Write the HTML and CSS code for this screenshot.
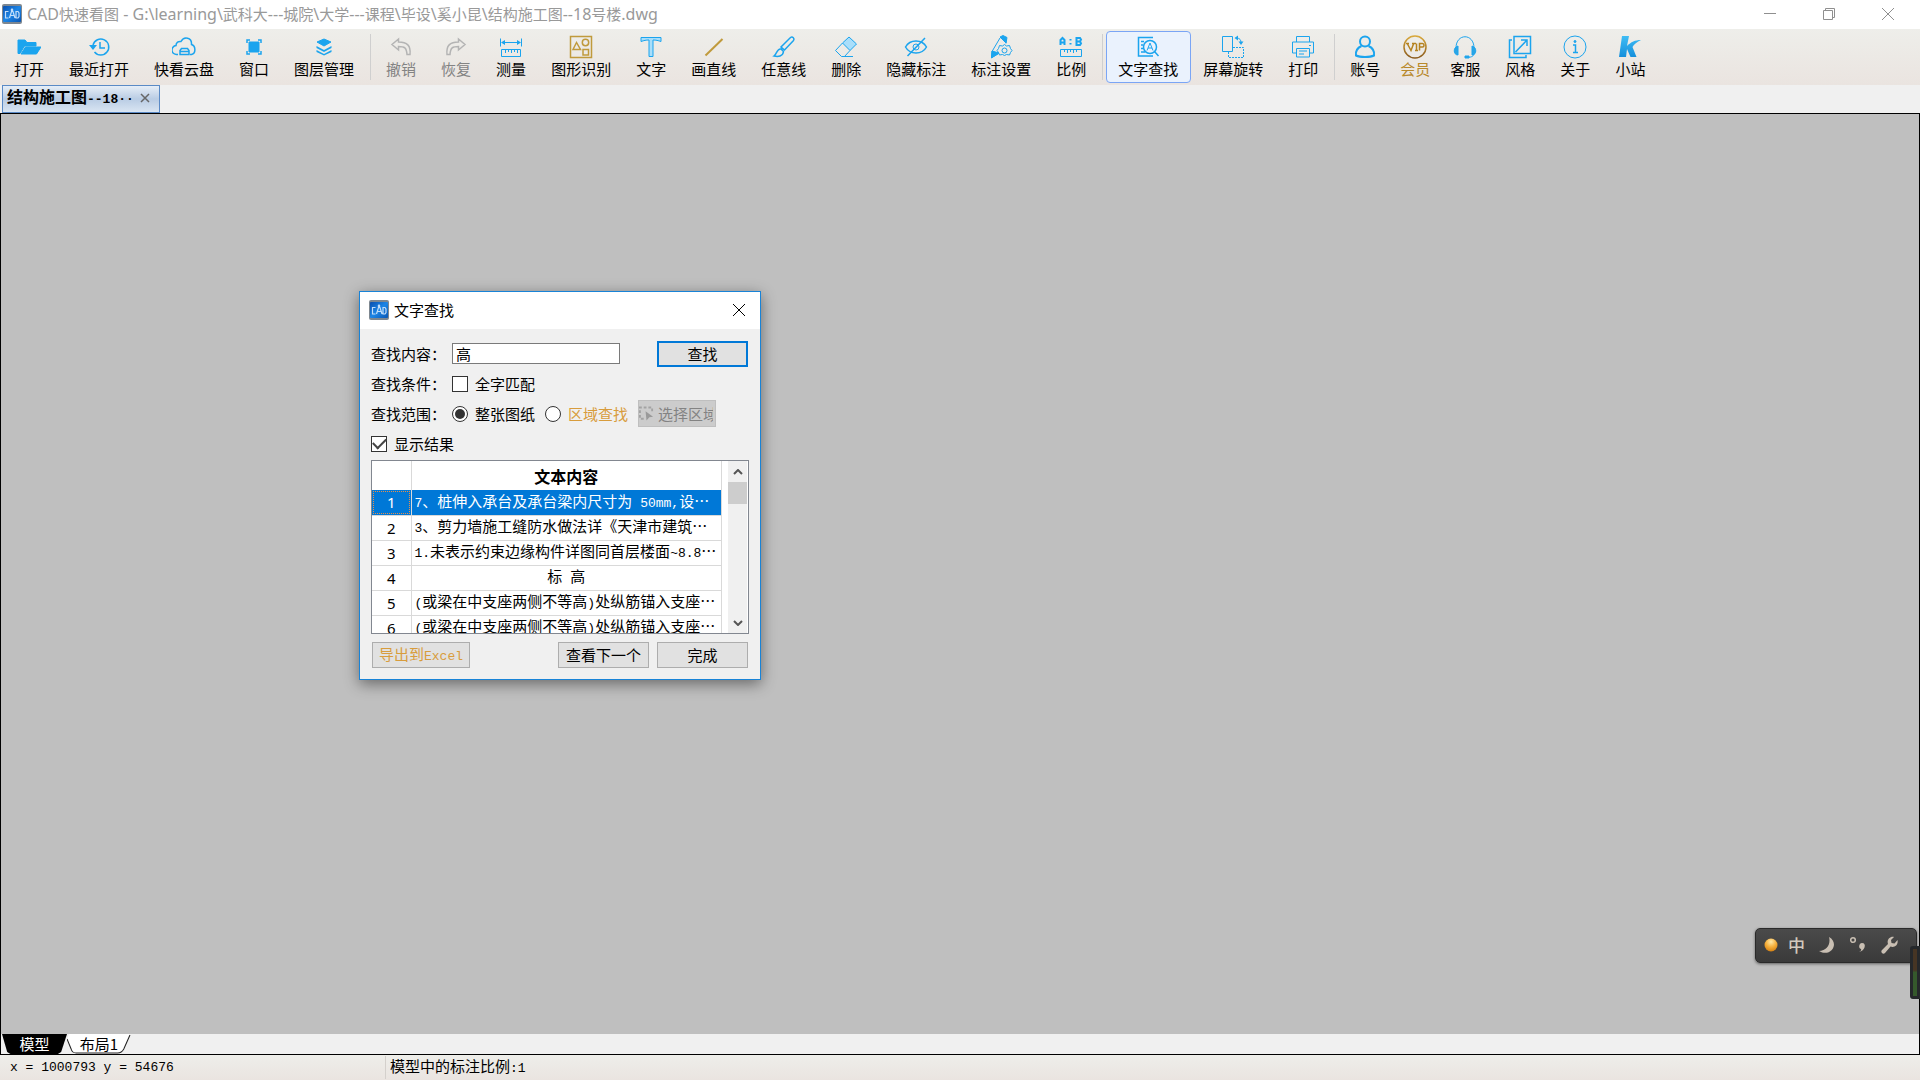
FILE: index.html
```
<!DOCTYPE html>
<html lang="zh-CN">
<head>
<meta charset="utf-8">
<title>CAD快速看图</title>
<link rel="stylesheet" href="styles.css">
</head>
<body>
<svg class="defs" aria-hidden="true">
  <defs>
    <linearGradient id="logo-blue" x1="0" y1="0" x2="1" y2="1"><stop offset="0" stop-color="#0a4fae"/><stop offset=".5" stop-color="#1d86e6"/><stop offset="1" stop-color="#0a56b4"/></linearGradient>
    <linearGradient id="gold" x1="0" y1="0" x2="0" y2="1"><stop offset="0" stop-color="#d9a93c"/><stop offset="1" stop-color="#8a5a1c"/></linearGradient>
    <linearGradient id="sky" x1="0" y1="0" x2="0" y2="1"><stop offset="0" stop-color="#3fbdf5"/><stop offset="1" stop-color="#168fdb"/></linearGradient>
    <radialGradient id="orb" cx=".5" cy=".25" r=".8"><stop offset="0" stop-color="#ffe9a8"/><stop offset=".5" stop-color="#f6b03c"/><stop offset="1" stop-color="#d07a0c"/></radialGradient>
    <symbol id="logo" viewBox="0 0 20 20">
      <rect x="0" y="0" width="20" height="20" rx="2" fill="#7e8790"/>
      <rect x="1" y="2" width="18" height="16" rx="1" fill="url(#logo-blue)"/>
      <path d="M6.500 7.500H3.500v6.500h3M7.500 14l2-6.500h1.500l2 6.500M8.500 11.500h3.500M14 7.500h2l1 1.500v3.500l-1 1.500h-2zM10 4.500v3" fill="none" stroke="#c3defa" stroke-width="1.200"/>
      <circle cx="10" cy="6" r="1.300" fill="#c3defa"/>
    </symbol>
  </defs>
</svg>

<header class="titlebar">
  <svg class="logo"><use href="#logo"/></svg>
  <h1 class="title"><span class="latin">CAD</span>快速看图<span class="latin"> - G:\learning\</span>武科大<span class="latin">---</span>城院<span class="latin">\</span>大学<span class="latin">---</span>课程<span class="latin">\</span>毕设<span class="latin">\</span>奚小昆<span class="latin">\</span>结构施工图<span class="latin">--18</span>号楼<span class="latin">.dwg</span></h1>
  <div class="window-controls">
    <button type="button" aria-label="最小化"><svg viewBox="0 0 14 14"><path d="M1 6.500h12"/></svg></button>
    <button type="button" aria-label="还原"><svg viewBox="0 0 14 14"><path d="M1.500 3.500h9v9h-9zM3.500 3V1.500h9v9H11"/></svg></button>
    <button type="button" aria-label="关闭"><svg viewBox="0 0 14 14"><path d="M1 1l12 12M13 1L1 13"/></svg></button>
  </div>
</header>

<nav class="toolbar">
  <button type="button" class="tool"><svg viewBox="0 0 24 24"><path d="M1 5h7l2 2.500h9V11H7.500L3 18.500H1z" fill="#1ba4ee"/><path d="M8.500 12H24l-4.500 7H4z" fill="#1ba4ee"/></svg>打开</button>
  <button type="button" class="tool"><svg viewBox="0 0 24 24"><path d="M6 10a8 8 0 1 1 1.500 7M13 7v6h5" class="w15"/><path d="M2 10h8l-4 5z" fill="#1ba4ee" stroke="none"/></svg>最近打开</button>
  <button type="button" class="tool"><svg viewBox="0 0 24 24"><path d="M6 19.500H5a4.500 4.500 0 0 1-1-9c0-3 2.500-4.500 5-4 3-5.500 11-4 10.500 3 4.500 1.500 4.500 9 0 10h-1.500M8 19.500v-4l1.500-2h6l1.500 2v4zM8 16.500h9" class="w15"/></svg>快看云盘</button>
  <button type="button" class="tool"><svg viewBox="0 0 24 24"><path d="M7 7h10v10H7z" fill="#1ba4ee"/><path d="M8 5H5v3M16 5h3v3M8 19H5v-3M16 19h3v-3" class="w15"/></svg>窗口</button>
  <button type="button" class="tool"><svg viewBox="0 0 24 24"><path d="M12 4l7 3-7 4-7-4z" fill="#1ba4ee"/><path d="M4.500 11l7.500 4 7.500-4v2L12 17l-7.500-4zM4.500 15l7.500 4 7.500-4v2L12 20.500 4.500 17z" fill="#1ba4ee" stroke="none"/></svg>图层管理</button>
  <span class="divider"></span>
  <button type="button" class="tool" disabled><svg viewBox="0 0 24 24" class="gray"><path d="M9.500 4L3 9.500 9.500 15v-3.500c6 0 8 1 8.500 8h3c1-9-3-12.500-11.500-12.500z"/></svg>撤销</button>
  <button type="button" class="tool" disabled><svg viewBox="0 0 24 24" class="gray"><path d="M14.500 4L21 9.500 14.500 15v-3.500c-6 0-8 1-8.500 8H3C2 10.500 6 7 14.500 7z"/></svg>恢复</button>
  <button type="button" class="tool"><svg viewBox="0 0 24 24"><path d="M1.500 3.500v8M22.500 3.500v8M3 7.500h18M2.500 14.500h19v7h-19zM6.500 15v3M9.500 15v2M12.500 15v3M15.500 15v2M18.500 15v3"/><path d="M2 7.500L6 5v5zM22 7.500L18 5v5z" fill="#1ba4ee" stroke="none"/></svg>测量</button>
  <button type="button" class="tool"><svg viewBox="0 0 24 24" class="goldline"><path d="M1.500 1.500h21v21h-21zM4 14.500l3.500-7 4 7zM14 14.500h5.500V20H14z"/><circle cx="16.500" cy="7.500" r="3.200"/></svg>图形识别</button>
  <button type="button" class="tool"><svg viewBox="0 0 24 24"><path d="M2 2.500h20v4c-3-1-5-1.500-8-1.500v16.500h-4V5C7 5 5 5.500 2 6.500z" fill="#a9defa"/></svg>文字</button>
  <button type="button" class="tool"><svg viewBox="0 0 24 24" class="goldline"><path d="M3.500 20.500L20.500 4" class="w2"/></svg>画直线</button>
  <button type="button" class="tool"><svg viewBox="0 0 24 24"><path d="M9 12L18.500 2.500c2-1.500 4.500 1 3 3L12.500 15zM9 14c-4-1-4 5-7 7 4 1 9 .5 9.500-4.500z" class="w15"/></svg>任意线</button>
  <button type="button" class="tool"><svg viewBox="0 0 24 24"><path d="M8.500 8L15 2l7.500 7L16 15.500z" fill="#a9defa"/><path d="M8.500 8L1.500 15.500 7.500 21.500h3L16 15.500M10 21.500h9"/></svg>删除</button>
  <button type="button" class="tool"><svg viewBox="0 0 24 24"><path d="M1.500 12C6 4 18 4 22.500 12 18 20 6 20 1.500 12zM21 3L3.500 21" class="w15"/><circle cx="12" cy="12" r="3"/></svg>隐藏标注</button>
  <button type="button" class="tool"><svg viewBox="0 0 24 24"><path d="M11 2l3-1.500 4 2L17 8l-2-2zM3 16l7 2-7.500 5z" fill="#1ba4ee"/><path d="M11 3L3 16.500 2.500 22.500 9 19M17 8.500V4"/><path d="M15.500 9.500l2 1.500 3-.5 1 3 1.500 2-1.500 2-1 2.500-3-.5-2 1-2-1-3 .5-1-2.500-1.500-2 1.500-2 1-3 3 .5z"/><circle cx="15.500" cy="15.500" r="2.500"/></svg>标注设置</button>
  <button type="button" class="tool"><svg viewBox="0 0 24 24"><path d="M1.500 10V5l2-2 2 2v5M2 7.500h4M17.500 3h3.500l1 1.500-1 2 1 2-1 1.500h-3.500zM18 6.500h3M11.500 4v1.500M11.500 8v1.500" class="w2"/><path d="M1.500 14.500h21v7h-21zM5.500 15v2M8.500 15v3M11.500 15v2M14.500 15v3M17.500 15v2"/></svg>比例</button>
  <span class="divider"></span>
  <button type="button" class="tool active" aria-pressed="true"><svg viewBox="0 0 24 24"><path d="M17 2.500H2.500v18.500H17M5 6.500h3M5 10h2M5 13.500h2M5 17h4M18.500 16.500l4 4.500" class="w15"/><circle cx="14" cy="12" r="6.500" fill="#eaf2fd" class="w15"/><path d="M11 15.500L14 8l3 7.500M12 13h4"/></svg>文字查找</button>
  <button type="button" class="tool"><svg viewBox="0 0 24 24"><path d="M1.500 1.500h10v15h-10zM15 3c4 0 5 2 5 5"/><path d="M13.500 3l3.500-2.500v5zM17.500 6.500h5L20 10z" fill="#1ba4ee" stroke="none"/><path d="M12 12.500h10.500v10h-15V17" stroke-dasharray="2 1"/></svg>屏幕旋转</button>
  <button type="button" class="tool"><svg viewBox="0 0 24 24"><path d="M5.500 7V1.500h13V7M5.500 18h-4V7h21v11h-4M5.500 13.500h13v8.500h-13zM8 16h8M8 19h5M18 10.500h2"/></svg>打印</button>
  <span class="divider"></span>
  <button type="button" class="tool"><svg viewBox="0 0 24 24"><circle cx="12" cy="6.500" r="5" class="w2"/><path d="M8.500 11C4 13 2.500 17 3 20.500c4 2 14 2 18 0C21.500 17 20 13 15.500 11" class="w2"/></svg>账号</button>
  <button type="button" class="tool vip"><svg viewBox="0 0 24 24"><circle cx="12" cy="12" r="11" fill="none" stroke="url(#gold)" stroke-width="1.500"/><path d="M3 8.500h3M4.500 9L8 15.500 10.500 9M9 8.500h4M13.500 8.500v7M12 15.500h3M16.500 15.500v-7h3c2 0 2 3.500 0 3.500h-3" fill="none" stroke="#b5821f" stroke-width="1.500"/></svg>会员</button>
  <button type="button" class="tool"><svg viewBox="0 0 24 24"><path d="M3 13C3-2 21-2 21 13M21 18c0 3-2 4-6 4.500"/><path d="M5 11v9c-5 0-5-8 0-9zM19 11v9c5 0 5-8 0-9zM12 21h4v2h-4z" fill="#2ba5e4"/></svg>客服</button>
  <button type="button" class="tool"><svg viewBox="0 0 24 24"><path d="M6 1.500h16.500v17H6zM4 5H1.500v17.500H18V20M7.500 17L19 5M13 5h6v6" class="w15"/></svg>风格</button>
  <button type="button" class="tool"><svg viewBox="0 0 24 24"><circle cx="12" cy="12" r="11"/><path d="M10 10h2.500v7M10 17.500h5" class="w15"/><circle cx="12" cy="6.500" r="1" fill="#1ba4ee"/></svg>关于</button>
  <button type="button" class="tool"><svg viewBox="0 0 24 24"><path d="M4 1h7L9 11c4-4 8-6 14-6-4 2-7 4-8.500 7l4 10h-6L9 14l-1 8H1z" fill="url(#sky)" stroke="none"/></svg>小站</button>
</nav>

<div class="file-tabs">
  <div class="file-tab"><strong>结构施工图<span class="mono">--18··</span></strong><button type="button" aria-label="关闭标签"><svg viewBox="0 0 10 10"><path d="M1 1l8 8M9 1L1 9"/></svg></button></div>
</div>

<main class="workspace">
  <div class="canvas"></div>
  <div class="layout-tabs">
    <button type="button" class="layout-tab current">模型</button>
    <button type="button" class="layout-tab"><svg viewBox="0 0 62 20" preserveAspectRatio="none"><path d="M0 5l4 10q1 4 5 4h40q4 0 6-4L61 1V0H2z" fill="#fff"/><path d="M0 5l4 10q1 4 5 4h40q4 0 6-4L61 1" fill="none" stroke="#222"/></svg><span>布局1</span></button>
  </div>
</main>

<footer class="statusbar">
  <span class="coords mono">x = 1000793 y = 54676</span>
  <span class="scale">模型中的标注比例<span class="mono">:1</span></span>
</footer>

<section class="dialog" role="dialog" aria-labelledby="dialog-title">
  <header class="dialog-head">
    <svg class="logo"><use href="#logo"/></svg>
    <h2 id="dialog-title">文字查找</h2>
    <button type="button" class="close" aria-label="关闭"><svg viewBox="0 0 14 14"><path d="M1 1l12 12M13 1L1 13"/></svg></button>
  </header>
  <form class="dialog-body">
    <div class="row">
      <label class="caption" for="query">查找内容：</label>
      <input id="query" class="query" type="text" value="高">
      <button type="button" class="btn primary push">查找</button>
    </div>
    <div class="row short">
      <span class="caption">查找条件：</span>
      <label class="option"><input type="checkbox">全字匹配</label>
    </div>
    <div class="row">
      <span class="caption">查找范围：</span>
      <label class="option"><input type="radio" name="range" checked>整张图纸</label>
      <label class="option gold"><input type="radio" name="range">区域查找</label>
      <button type="button" class="btn pick" disabled><svg viewBox="0 0 16 16"><path d="M5 13H1V1h13v5" fill="none" stroke="#a3a3a3" stroke-width="2" stroke-dasharray="3 2"/><path d="M7 5l8 6-4 .5-3 3.500z" fill="#9a9a9a"/></svg><span>选择区域</span></button>
    </div>
    <div class="row short">
      <label class="option"><input type="checkbox" checked>显示结果</label>
    </div>
    <div class="results">
      <div class="viewport">
        <table>
          <thead><tr><th class="num"></th><th>文本内容</th></tr></thead>
          <tbody>
            <tr class="selected"><th class="num">1</th><td><span class="mono">7</span>、桩伸入承台及承台梁内尺寸为<span class="mono"> 50mm,</span>设…</td></tr>
            <tr><th class="num">2</th><td><span class="mono">3</span>、剪力墙施工缝防水做法详《天津市建筑…</td></tr>
            <tr><th class="num">3</th><td><span class="mono">1.</span>未表示约束边缘构件详图同首层楼面<span class="mono">~8.8</span>…</td></tr>
            <tr><th class="num">4</th><td class="center">标<span class="mono"> </span>高</td></tr>
            <tr><th class="num">5</th><td><span class="mono">(</span>或梁在中支座两侧不等高<span class="mono">)</span>处纵筋锚入支座…</td></tr>
            <tr><th class="num">6</th><td><span class="mono">(</span>或梁在中支座两侧不等高<span class="mono">)</span>处纵筋锚入支座…</td></tr>
          </tbody>
        </table>
      </div>
      <div class="scrollbar">
        <button type="button" aria-label="向上"><svg viewBox="0 0 10 6"><path d="M1 5l4-4 4 4"/></svg></button>
        <div class="thumb"></div>
        <button type="button" class="down" aria-label="向下"><svg viewBox="0 0 10 6"><path d="M1 1l4 4 4-4"/></svg></button>
      </div>
    </div>
    <div class="row actions">
      <button type="button" class="btn export">导出到<span class="mono">Excel</span></button>
      <button type="button" class="btn push">查看下一个</button>
      <button type="button" class="btn">完成</button>
    </div>
  </form>
</section>

<aside class="ime">
  <svg viewBox="0 0 14 14" class="orb"><circle cx="7" cy="7" r="6.500" fill="url(#orb)"/></svg>
  <span>中</span>
  <svg viewBox="0 0 18 18"><path d="M11 1c11 6 2 21-10 14 8 0 12-7 10-14z"/></svg>
  <svg viewBox="0 0 18 18"><circle cx="4" cy="4" r="2.300" class="ring"/><path d="M13 7c5 0 3 8-3 9 2-1 2.500-2 2-3-3-1-2-6 1-6z"/></svg>
  <svg viewBox="0 0 18 18"><path d="M14 1l-3 3 .5 3 3 .5L17.500 4c1 5-3 8-7 6.500L5 17c-2 2-5-1-3-3l6-6C6.500 4 10 0 14 1z"/></svg>
</aside>
<aside class="meter"></aside>
</body>
</html>
```
FILE: styles.css
```
* { box-sizing: border-box; }

body {
  margin: 0;
  height: 100vh;
  display: flex;
  flex-direction: column;
  overflow: hidden;
  background: #f0f0f0;
  color: #000;
  font: 15px/20px "Noto Sans CJK SC", sans-serif;
}

button, input { font: inherit; color: inherit; margin: 0; }
button { padding: 0; border: 0; background: none; }
h1, h2 { margin: 0; font-size: 15px; font-weight: 400; }
svg { display: block; }

.defs { position: absolute; width: 0; height: 0; }
.mono { font-family: "Liberation Mono", monospace; font-size: 13px; white-space: pre; }
.latin { font-family: "Noto Sans", sans-serif; font-size: 16px; }
.logo { width: 20px; height: 20px; flex: none; }

/* Title bar */
.titlebar {
  display: flex;
  align-items: center;
  height: 29px;
  flex: none;
  padding: 0 3px 1px 2px;
  background: #fff;
}
.title {
  flex: 1;
  margin-left: 5px;
  color: #999;
  white-space: nowrap;
}
.window-controls { display: flex; }
.window-controls button { width: 59px; height: 28px; display: grid; place-items: center; }
.window-controls svg { width: 14px; height: 14px; fill: none; stroke: #8f8f8f; }

/* Toolbar */
.toolbar {
  display: flex;
  flex: none;
  height: 56px;
  padding: 2px;
  background: linear-gradient(#eeeeea, #eae4e0);
}
.tool {
  display: flex;
  flex-direction: column;
  align-items: center;
  height: 52px;
  padding: 3px 12px 0 11px;
  border: 1px solid transparent;
  border-radius: 4px;
  white-space: nowrap;
}
.tool svg {
  width: 24px;
  height: 24px;
  fill: none;
  stroke: #1ba4ee;
  stroke-width: 1;
}
.tool .w15 { stroke-width: 1.5; }
.tool .w2 { stroke-width: 2; }
.tool svg.gray { stroke: #b4b4b4; stroke-width: 1.5; }
.tool svg.goldline { stroke: #c09a3c; stroke-width: 1.5; }
.tool:disabled { color: #838383; }
.tool.active { background: #eaf2fd; border-color: #7aa5f5; }
.tool.vip { color: #b8892b; padding: 3px 7px 0 6px; }
.divider { flex: none; width: 1px; height: 46px; margin: 3px; background: #cfcfcf; }

/* Open files */
.file-tabs { flex: none; display: flex; height: 28px; padding-left: 2px; }
.file-tab {
  display: flex;
  align-items: center;
  justify-content: space-between;
  width: 158px;
  height: 28px;
  padding: 0 9px 2px 4px;
  border: 1px solid #5a8ac6;
  background: linear-gradient(#e6eef7, #b9cce4 50%, #d9e5f2);
  font-size: 16px;
  white-space: nowrap;
}
.file-tab svg { width: 10px; height: 10px; fill: none; stroke: #666; stroke-width: 1.5; }

/* Drawing area */
.workspace {
  flex: 1;
  display: flex;
  flex-direction: column;
  border: 1px solid #000;
}
.canvas { flex: 1; background: #bfbfbf; }
.layout-tabs { display: flex; height: 20px; padding-left: 1px; }
.layout-tab { position: relative; width: 64px; height: 20px; }
.layout-tab svg { position: absolute; inset: 0; width: 100%; height: 100%; }
.layout-tab span { position: relative; }
.layout-tab.current { width: 65px; background: #000; color: #fff; clip-path: polygon(0 0, 100% 0, 91% 90%, 86% 100%, 13% 100%, 8% 90%); }

.statusbar {
  flex: none;
  display: flex;
  align-items: center;
  height: 25px;
  padding-left: 10px;
  background: linear-gradient(#eeeeea, #eae4e0);
}
.coords { width: 375px; }
.scale { padding-left: 4px; border-left: 1px solid #d4d0cc; }

/* Search dialog */
.dialog {
  position: absolute;
  left: 359px;
  top: 291px;
  width: 402px;
  border: 1px solid #1883d7;
  background: #f0f0f0;
  box-shadow: 0 4px 14px rgba(0, 0, 0, .45);
}
.dialog-head { display: flex; align-items: center; height: 37px; padding: 0 14px 2px 9px; background: #fff; }
.dialog-head h2 { flex: 1; margin-left: 5px; }
.close svg { width: 14px; height: 14px; fill: none; stroke: #000; }
.dialog-body { display: flex; flex-direction: column; gap: 8px; padding: 11px; }
.row { display: flex; align-items: center; height: 27px; padding-right: 1px; }
.row.short { height: 17px; }
.caption { width: 81px; }
.query { width: 168px; height: 21px; padding: 0 3px; border: 1px solid #7a7a7a; background: #fff; }
.push { margin-left: auto; }
.option { display: flex; align-items: center; gap: 7px; margin-right: 10px; white-space: nowrap; }
.option.gold { color: #d89c3c; }
.option input {
  appearance: none;
  width: 16px;
  height: 16px;
  border: 1px solid #333;
  background: #fff;
  display: grid;
  place-items: center;
}
.option input[type="radio"] { border-radius: 50%; }
.option input[type="radio"]:checked::before { content: ""; width: 10px; height: 10px; border-radius: 50%; background: #333; }
.option input[type="checkbox"]:checked::before {
  content: "";
  width: 11px;
  height: 6px;
  margin-bottom: 3px;
  border: solid #444;
  border-width: 0 0 2px 2px;
  rotate: -45deg;
}
.btn { width: 91px; height: 26px; border: 1px solid #adadad; background: #e1e1e1; white-space: nowrap; }
.btn.primary { border: 2px solid #0078d7; }
.btn.pick {
  display: flex;
  align-items: center;
  gap: 4px;
  width: 78px;
  height: 27px;
  padding-right: 2px;
  border-color: #bfbfbf;
  background: #ccc;
  color: #838383;
}
.pick svg { flex: none; width: 15px; height: 16px; }
.pick span { overflow: hidden; }
.btn.export { width: 98px; margin-left: 1px; color: #d89c3c; }
.actions { gap: 8px; height: 26px; }

.results { display: flex; height: 174px; border: 1px solid #828790; background: #fff; }
.viewport { width: 350px; overflow: hidden; }
table { width: 350px; border-collapse: collapse; table-layout: fixed; }
th, td { height: 25px; padding: 0; border: solid #d9d9d9; border-width: 0 1px 1px 0; font-weight: 400; white-space: nowrap; overflow: hidden; }
td { padding-left: 3px; }
td.center { padding: 0; text-align: center; }
thead th { height: 29px; border-bottom: 0; font-size: 16px; font-weight: 700; }
th.num { width: 39px; font-family: "Noto Sans", sans-serif; }
.selected th, .selected td { background: #0078d7; color: #fff; }
.selected th { outline: 1px dotted #e8904a; outline-offset: -2px; }
.scrollbar { display: flex; flex-direction: column; width: 19px; margin: 0 1px 0 auto; background: #f0f0f0; }
.scrollbar button { height: 21px; display: grid; place-items: center; }
.scrollbar svg { width: 10px; height: 6px; fill: none; stroke: #555; stroke-width: 2; }
.thumb { height: 22px; background: #cdcdcd; }
.scrollbar .down { margin-top: auto; }

/* Floating input-method bar */
.ime {
  position: absolute;
  right: 3px;
  bottom: 117px;
  display: flex;
  align-items: center;
  gap: 13px;
  width: 162px;
  height: 35px;
  padding: 0 8px 2px;
  border: 1px solid #2a2a2a;
  border-radius: 5px;
  background: linear-gradient(#4a4a4a, #3a3a3a);
  color: #d3c9bd;
  box-shadow: 0 1px 3px rgba(0, 0, 0, .5);
  font-size: 17px;
  font-weight: 500;
}
.ime svg { width: 18px; height: 18px; fill: #c9bfb3; flex: none; }
.ime .orb { width: 14px; height: 14px; margin-right: -3px; }
.ring { fill: none; stroke: #c9bfb3; stroke-width: 1.5; }
.meter {
  position: absolute;
  right: 0;
  bottom: 81px;
  width: 10px;
  height: 53px;
  border: 3px solid #25282b;
  border-radius: 3px 0 0 3px;
  background: linear-gradient(#463524 45%, #35592c 50%);
}
```
